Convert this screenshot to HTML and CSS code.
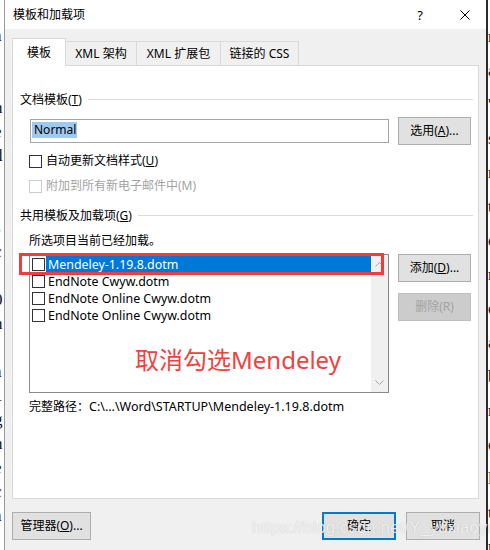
FILE: index.html
```html
<!DOCTYPE html>
<html lang="zh-CN">
<head>
<meta charset="utf-8">
<title>模板和加载项</title>
<link rel="stylesheet" href="styles.css">
</head>
<body>
<div class="screen">
  <div class="bg-left"><div class="bg-text">l
a
i
t
n
e
d
,
r
s
c
t
0
n
r
a
1
g
n
e
c
a</div></div>
  <div class="dialog">
    <div class="titlebar">
      <span class="title">模板和加载项</span>
      <span class="help">?</span>
      <svg class="close" width="10" height="10" viewBox="0 0 10 10"><path d="M0.5 0.5L9.5 9.5M9.5 0.5L0.5 9.5" stroke="#000" stroke-width="1" fill="none"/></svg>
    </div>
    <div class="body">
      <div class="tabs">
        <div class="tab active">模板</div>
        <div class="tab t1">XML 架构</div>
        <div class="tab t2">XML 扩展包</div>
        <div class="tab t3">链接的 CSS</div>
      </div>
      <div class="panel">
        <div class="group-head g1"><span>文档模板(<u>T</u>)</span></div>
        <div class="input-row">
          <div class="textbox"><span class="sel">Normal</span></div>
          <div class="btn">选用(<u>A</u>)...</div>
        </div>
        <div class="check-row r1"><span class="cb"></span><span>自动更新文档样式(<u>U</u>)</span></div>
        <div class="check-row r2 disabled"><span class="cb"></span><span>附加到所有新电子邮件中(M)</span></div>
        <div class="group-head g2"><span>共用模板及加载项(<u>G</u>)</span></div>
        <div class="info">所选项目当前已经加载。</div>
        <div class="list-row">
          <div class="list-wrap">
            <div class="list">
              <div class="items">
                <div class="item selected"><span class="cb"></span><span class="name">Mendeley-1.19.8.dotm</span></div>
                <div class="item"><span class="cb"></span><span class="name">EndNote Cwyw.dotm</span></div>
                <div class="item"><span class="cb"></span><span class="name">EndNote Online Cwyw.dotm</span></div>
                <div class="item"><span class="cb"></span><span class="name">EndNote Online Cwyw.dotm</span></div>
              </div>
              <div class="scrollbar">
                <svg width="9" height="5" viewBox="0 0 9 5"><path d="M0.5 4.5L4.5 0.5L8.5 4.5" fill="none" stroke="#a6a6a6" stroke-width="1"/></svg>
                <svg width="9" height="5" viewBox="0 0 9 5"><path d="M0.5 0.5L4.5 4.5L8.5 0.5" fill="none" stroke="#a6a6a6" stroke-width="1"/></svg>
              </div>
            </div>
            <div class="annot-box"></div>
            <div class="annot-text">取消勾选Mendeley</div>
          </div>
          <div class="side-btns">
            <div class="btn">添加(<u>D</u>)...</div>
            <div class="btn off">删除(R)</div>
          </div>
        </div>
        <div class="path">完整路径：<span class="path-val">C:\...\Word\STARTUP\Mendeley-1.19.8.dotm</span></div>
      </div>
      <div class="footer">
        <div class="btn mgr">管理器(<u>O</u>)...</div>
        <span class="spacer"></span>
        <div class="btn ok">确定</div>
        <div class="btn cancel">取消</div>
      </div>
    </div>
  </div>
  <div class="bg-right"><div class="bg-text2">r
a
'
s
n
t
e
r
o
a
b
r
e
l
t
n</div></div>
  <div class="watermark">https://blog.csdn.net/Y_yuxiaoyu</div>
</div>
</body>
</html>
```
FILE: styles.css
```css
* { box-sizing: border-box; }
html, body { margin: 0; padding: 0; }
body {
  width: 490px;
  height: 550px;
  overflow: hidden;
  font-family: "Noto Sans", "Noto Sans CJK SC", sans-serif;
  font-size: 12px;
  color: #000;
  background: #fff;
}
.screen { position: relative; display: flex; width: 490px; height: 550px; }

.bg-left { width: 4px; flex: none; overflow: hidden; background: #fff; }
.bg-text {
  font-family: "Liberation Serif", serif;
  font-size: 17px;
  line-height: 24px;
  margin-left: -6px;
  width: 12px;
  white-space: pre;
  color: #111;
}
.bg-right { width: 4px; flex: none; overflow: hidden; background: #fff; border-left: 2px solid #2b2b2b; }
.bg-text2 {
  font-family: "Liberation Serif", serif;
  font-size: 17px;
  line-height: 34px;
  white-space: pre;
  color: #222;
  margin-top: 20px;
}

.dialog {
  width: 482px;
  height: 550px;
  flex: none;
  display: flex;
  flex-direction: column;
  border-left: 1px solid #9a9a9a;
  background: #f0f0f0;
}
.titlebar {
  height: 29px;
  flex: none;
  background: #fff;
  display: flex;
  align-items: center;
  padding: 0 16px 0 8px;
}
.title { flex: 1; line-height: 16px; }
.help { font-size: 13px; line-height: 16px; margin-right: 37px; }
.close { display: block; }

.body { flex: 1; padding: 9px 7px 0 7px; display: flex; flex-direction: column; }

.tabs { height: 27px; flex: none; display: flex; align-items: flex-end; }
.tab {
  height: 24px;
  border-top: 1px solid #d9d9d9;
  border-right: 1px solid #d9d9d9;
  display: flex;
  align-items: center;
  justify-content: center;
  line-height: 16px;
  white-space: nowrap;
}
.tab.active {
  width: 54px;
  height: 28px;
  border-left: 1px solid #d9d9d9;
  background: #fff;
  margin-bottom: -1px;
  position: relative;
  z-index: 1;
}
.tab.t1 { width: 71px; }
.tab.t2 { width: 84px; }
.tab.t3 { width: 78px; }

.panel {
  height: 434px;
  flex: none;
  border: 1px solid #d9d9d9;
  background: #fff;
  padding: 0 5px 0 7px;
  display: flex;
  flex-direction: column;
}

.group-head {
  height: 16px;
  display: flex;
  align-items: center;
  line-height: 16px;
  white-space: nowrap;
}
.group-head::after {
  content: "";
  flex: 1;
  height: 1px;
  background: #dcdcdc;
  margin-left: 6px;
  margin-top: -1px;
}
.g1 { margin-top: 26px; }
.g2 { margin-top: 14px; }

.input-row {
  margin-top: 9px;
  height: 28px;
  display: flex;
  align-items: center;
  padding-left: 10px;
}
.textbox {
  width: 359px;
  height: 24px;
  border: 1px solid #a5a5a5;
  padding: 2px 1px 0 1px;
  margin-right: 9px;
  display: flex;
  align-items: flex-start;
}
.sel {
  background: #9fcaf0;
  height: 16px;
  line-height: 16px;
  padding: 0 1px 0 2px;
}

.btn {
  width: 73px;
  height: 28px;
  flex: none;
  border: 1px solid #adadad;
  background: #e1e1e1;
  display: flex;
  align-items: center;
  justify-content: center;
  line-height: 16px;
  white-space: nowrap;
}
.btn.off { background: #cccccc; border-color: #bfbfbf; color: #a2a2a2; }

.check-row {
  height: 16px;
  display: flex;
  align-items: center;
  padding-left: 9px;
  line-height: 16px;
  white-space: nowrap;
}
.r1 { margin-top: 8px; }
.r2 { margin-top: 9px; }
.cb {
  width: 13px;
  height: 13px;
  flex: none;
  border: 1px solid #333;
  background: #fff;
  margin-right: 4px;
}
.disabled { color: #a3a3a3; }
.disabled .cb { border-color: #cccccc; }

.info { margin-top: 9px; height: 16px; line-height: 16px; padding-left: 9px; }

.list-row { margin-top: 5px; display: flex; padding-left: 9px; }
.list-wrap { position: relative; width: 360px; height: 139px; flex: none; }
.list {
  width: 100%;
  height: 100%;
  border: 1px solid #8a8a8a;
  background: #fff;
  display: flex;
}
.items { flex: 1; padding-top: 1px; font-size: 12.4px; }
.item { height: 17px; display: flex; align-items: center; padding-left: 2px; }
.item .cb { margin-right: 1px; }
.name { flex: 1; height: 17px; line-height: 17px; padding-left: 2px; white-space: nowrap; }
.item.selected .name { background: #0078d7; color: #fff; }
.scrollbar {
  width: 17px;
  flex: none;
  background: #f0f0f0;
  display: flex;
  flex-direction: column;
  justify-content: space-between;
  align-items: center;
  padding: 7px 0;
}
.scrollbar svg { display: block; }

.annot-box {
  position: absolute;
  left: -10px;
  top: -1px;
  width: 365px;
  height: 22px;
  border: 3px solid #f03c3c;
}
.annot-text {
  position: absolute;
  left: 106px;
  top: 91px;
  font-size: 24px;
  line-height: 30px;
  color: #f23f3f;
  white-space: nowrap;
}

.side-btns { margin-left: 9px; display: flex; flex-direction: column; gap: 11px; }

.path { margin-top: 6px; height: 16px; line-height: 16px; padding-left: 9px; white-space: nowrap; }
.path-val { font-size: 12.5px; }

.footer { margin-top: 13px; display: flex; margin-right: -1px; }
.btn.mgr { width: 79px; }
.spacer { flex: 1; }
.btn.ok { width: 74px; border: 2px solid #0078d7; margin-right: 10px; }
.btn.cancel { width: 74px; }

.watermark {
  position: absolute;
  left: 252px;
  top: 518px;
  font-family: "Liberation Sans", Arial, sans-serif;
  font-size: 17px;
  line-height: 20px;
  color: rgba(252, 252, 252, 0.8);
  text-shadow: 0 0 1px rgba(140, 140, 140, 0.5);
  white-space: nowrap;
  pointer-events: none;
}
```
